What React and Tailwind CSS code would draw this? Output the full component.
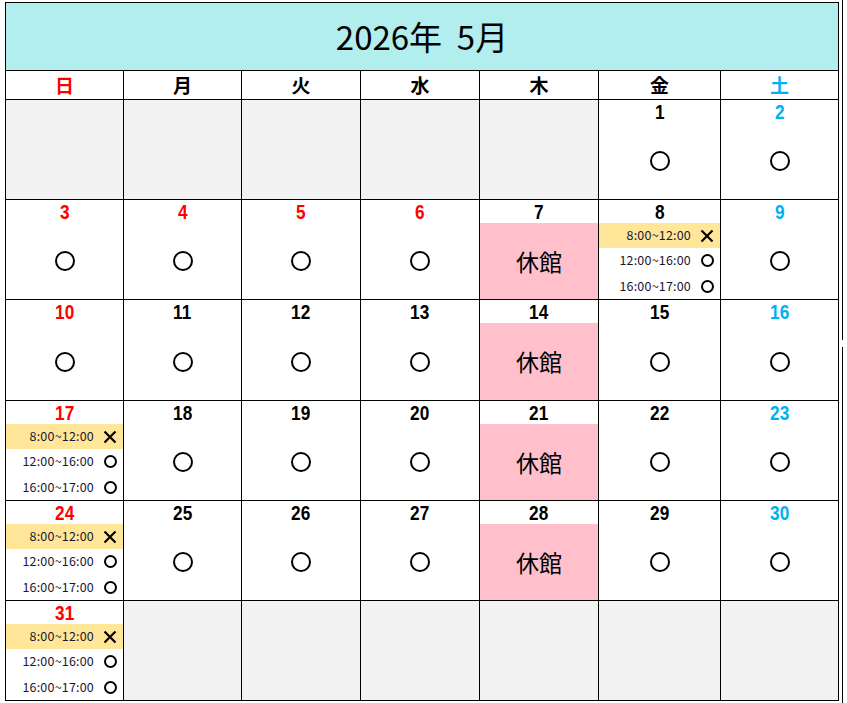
import React from 'react';

const WEEK = ['日', '月', '火', '水', '木', '金', '土'];
const CLOSED = [7, 14, 21, 28];
const HOLIDAYS = [4, 5, 6];
const SLOT_DAYS = [8, 17, 24, 31];
const SLOTS = [
  { time: '8:00~12:00', full: true },
  { time: '12:00~16:00', full: false },
  { time: '16:00~17:00', full: false },
];

const jp = { fontFamily: '"Noto Sans CJK JP", "Noto Sans", sans-serif' };

// May 2026 starts on Friday
const buildWeeks = () => {
  const cells = [];
  for (let i = 0; i < 5; i++) cells.push(null);
  for (let d = 1; d <= 31; d++) cells.push(d);
  while (cells.length % 7) cells.push(null);
  const weeks = [];
  for (let i = 0; i < cells.length; i += 7) weeks.push(cells.slice(i, i + 7));
  return weeks;
};

const dayColor = (i) => (i === 0 ? 'text-[#ff0000]' : i === 6 ? 'text-[#00b0f0]' : 'text-black');

const Circle = ({ small }) =>
  small ? (
    <div className="w-[13px] h-[13px] rounded-full border-2 border-black" />
  ) : (
    <div className="w-[20px] h-[20px] rounded-full border-2 border-black" />
  );

const Cross = () => (
  <svg width="14" height="14" viewBox="0 0 14 14">
    <path d="M1.5 1.5 L12.5 12.5 M12.5 1.5 L1.5 12.5" stroke="#000" strokeWidth="2.2" />
  </svg>
);

const DayCell = ({ day, col, tall }) => {
  const h = tall ? 'h-[101px]' : 'h-[100px]';
  if (!day) return <div className={`${h} bg-[#f2f2f2] border-r border-b border-black`} />;

  let body;
  if (CLOSED.includes(day)) {
    body = (
      <div className="flex-1 bg-[#ffc0cb] flex items-center justify-center text-[23px] text-black" style={jp}>
        休館
      </div>
    );
  } else if (SLOT_DAYS.includes(day)) {
    body = (
      <div className="flex-1 flex flex-col">
        {SLOTS.map((s, i) => (
          <div
            key={s.time}
            className={`flex items-center justify-end gap-[7px] pr-[4px] ${i === 2 ? 'flex-1' : 'h-[25px]'} ${
              s.full ? 'bg-[#ffe699]' : ''
            }`}
          >
            <span className="text-[12.5px] tracking-[0.2px] text-[#1c1530] leading-none" style={jp}>
              {s.time}
            </span>
            <div className="w-[18px] flex justify-center">{s.full ? <Cross /> : <Circle small />}</div>
          </div>
        ))}
      </div>
    );
  } else {
    body = (
      <div className="flex-1 flex items-center justify-center">
        <Circle />
      </div>
    );
  }

  const color = HOLIDAYS.includes(day) ? 'text-[#ff0000]' : dayColor(col);

  return (
    <div className={`${h} flex flex-col border-r border-b border-black bg-white`}>
      <div className="h-[23px] flex items-center justify-center">
        <span
          className={`inline-block scale-x-[0.82] text-[21px] font-bold leading-none ${color}`}
          style={{ fontFamily: '"Liberation Sans", Arial, sans-serif' }}
        >
          {day}
        </span>
      </div>
      {body}
    </div>
  );
};

export default function App() {
  const weeks = buildWeeks();

  return (
    <div className="w-[847px] h-[703px] bg-white flex items-start overflow-hidden">
      <div className="ml-[5px] mt-[2px] border-l border-t border-black grid grid-cols-[118px_118px_119px_119px_119px_122px_118px]">
        {/* Title */}
        <div
          className="col-span-7 h-[68px] bg-[#b2eeee] border-r border-b border-black flex items-center justify-center text-[33px] text-black"
          style={jp}
        >
          2026年&nbsp;&nbsp;5月
        </div>

        {/* Weekday header */}
        {WEEK.map((w, i) => (
          <div
            key={w}
            className={`h-[29px] border-r border-b border-black flex items-center justify-center text-[19px] font-bold ${dayColor(i)}`}
            style={jp}
          >
            {w}
          </div>
        ))}

        {weeks.map((week, wi) =>
          week.map((day, i) => <DayCell key={`${wi}-${i}`} day={day} col={i} tall={wi === 2} />)
        )}
      </div>

      {/* stray sheet edge line */}
      <div className="ml-[3px] flex flex-col h-[703px]">
        <div className="w-[1px] h-[340px] bg-black" />
        <div className="w-[1px] h-[7px]" />
        <div className="w-[1px] flex-1 bg-black" />
      </div>
    </div>
  );
}
